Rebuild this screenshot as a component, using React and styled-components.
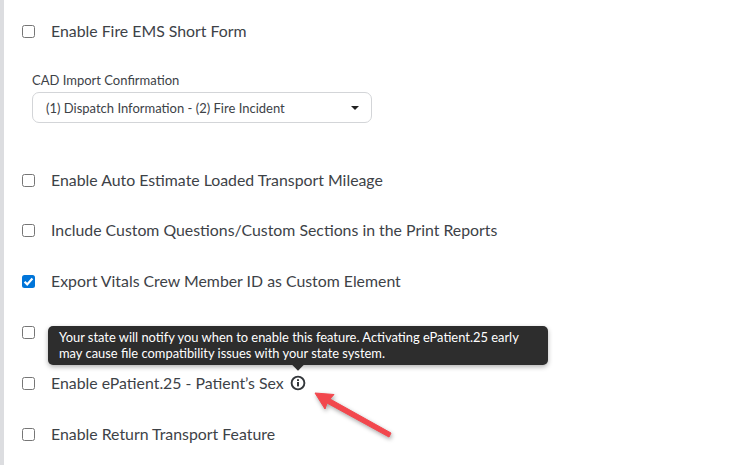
import React from "react";
import styled, { createGlobalStyle } from "styled-components";

const GlobalStyle = createGlobalStyle`
	html, body {
		margin: 0;
		padding: 0;
		background: #fff;
	}
	body {
		font-family: Lato, "Open Sans", sans-serif;
		color: #3d4247;
		overflow: hidden;
	}
`;

const Check = ({ checked }) => (
	<Box $checked={checked}>
		{checked && (
			<svg width="13" height="13" viewBox="0 0 13 13">
				<path d="M2.6 6.8 L5.2 9.4 L10.4 3.6" fill="none" stroke="#fff" strokeWidth="2.2" />
			</svg>
		)}
	</Box>
);

const App = () => {
	return (
		<Page>
			<GlobalStyle />
			<Content>
				<Row>
					<Check />
					<Label>Enable Fire EMS Short Form</Label>
				</Row>
				<Field>
					<FieldLabel>CAD Import Confirmation</FieldLabel>
					<Select>
						<span>(1) Dispatch Information - (2) Fire Incident</span>
						<Caret />
					</Select>
				</Field>
				<Row $tight>
					<Check />
					<Label>Enable Auto Estimate Loaded Transport Mileage</Label>
				</Row>
				<Row>
					<Check />
					<Label>Include Custom Questions/Custom Sections in the Print Reports</Label>
				</Row>
				<Row>
					<Check checked />
					<Label>Export Vitals Crew Member ID as Custom Element</Label>
				</Row>
				<Row>
					<Check />
				</Row>
				<Row>
					<Check />
					<Label>Enable ePatient.25 - Patient’s Sex</Label>
					<InfoIcon width="16" height="16" viewBox="0 0 16 16">
						<circle cx="8" cy="8" r="6.4" fill="none" stroke="#33373b" strokeWidth="1.9" />
						<rect x="7" y="7" width="2" height="4.4" fill="#33373b" />
						<rect x="7" y="4.2" width="2" height="1.8" fill="#33373b" />
					</InfoIcon>
					<Tooltip>
						Your state will notify you when to enable this feature. Activating ePatient.25 early
						may cause file compatibility issues with your state system.
						<TooltipTip />
					</Tooltip>
					<Arrow width="90" height="60" viewBox="0 0 90 60">
						<path
							d="M2 11 L21 12.5 L17 17 L78 51 L76 55 L14 21 L12 27 Z"
							fill="#f2474d"
							stroke="#f2474d"
							strokeWidth="1"
							strokeLinejoin="round"
						/>
					</Arrow>
				</Row>
				<Row>
					<Check />
					<Label>Enable Return Transport Feature</Label>
				</Row>
			</Content>
		</Page>
	);
};

const Page = styled.div`
	display: flex;
	width: 730px;
	height: 465px;
	border-left: 4px solid #dcdde0;
	box-sizing: border-box;
	overflow: hidden;
`;

const Content = styled.div`
	display: flex;
	flex-direction: column;
	padding: 21px 0 0 18px;
`;

const Row = styled.div`
	position: relative;
	display: flex;
	flex-shrink: 0;
	align-items: center;
	height: 20px;
	margin-bottom: ${(p) => (p.$tight ? "30px" : "31px")};
`;

const Box = styled.div`
	display: flex;
	align-items: center;
	justify-content: center;
	box-sizing: border-box;
	width: 13px;
	height: 13px;
	margin-right: 16px;
	border-radius: 2.5px;
	border: ${(p) => (p.$checked ? "none" : "1px solid #767676")};
	background: ${(p) => (p.$checked ? "#0075d9" : "#fff")};
`;

const Label = styled.span`
	font-size: 15.85px;
	line-height: 20px;
	white-space: nowrap;
`;

const Field = styled.div`
	display: flex;
	flex-shrink: 0;
	flex-direction: column;
	margin: 0 0 47px 10px;
`;

const FieldLabel = styled.div`
	font-size: 13px;
	line-height: 16px;
	margin-bottom: 4px;
`;

const Select = styled.div`
	display: flex;
	align-items: center;
	justify-content: space-between;
	box-sizing: border-box;
	width: 340px;
	height: 31px;
	padding: 0 12px 0 13px;
	font-size: 13px;
	border: 1px solid #d3d5d8;
	border-radius: 7px;
`;

const Caret = styled.div`
	width: 0;
	height: 0;
	border-left: 4.5px solid transparent;
	border-right: 4.5px solid transparent;
	border-top: 4.5px solid #222;
`;

const InfoIcon = styled.svg`
	margin-left: 6px;
`;

const Tooltip = styled.div`
	position: absolute;
	left: 26px;
	bottom: 28px;
	box-sizing: border-box;
	width: 500px;
	height: 39px;
	padding: 3px 11px;
	font-size: 12.9px;
	line-height: 16px;
	color: #fff;
	background: #2d2d2d;
	border-radius: 5px;
	box-shadow: 0 2px 5px rgba(0, 0, 0, 0.3);
`;

const TooltipTip = styled.div`
	position: absolute;
	left: 246px;
	bottom: -4px;
	width: 8px;
	height: 8px;
	background: #2d2d2d;
	transform: rotate(45deg);
`;

const Arrow = styled.svg`
	position: absolute;
	left: 291px;
	top: 9px;
	filter: drop-shadow(1px 2px 2px rgba(0, 0, 0, 0.35));
`;

export default App;
